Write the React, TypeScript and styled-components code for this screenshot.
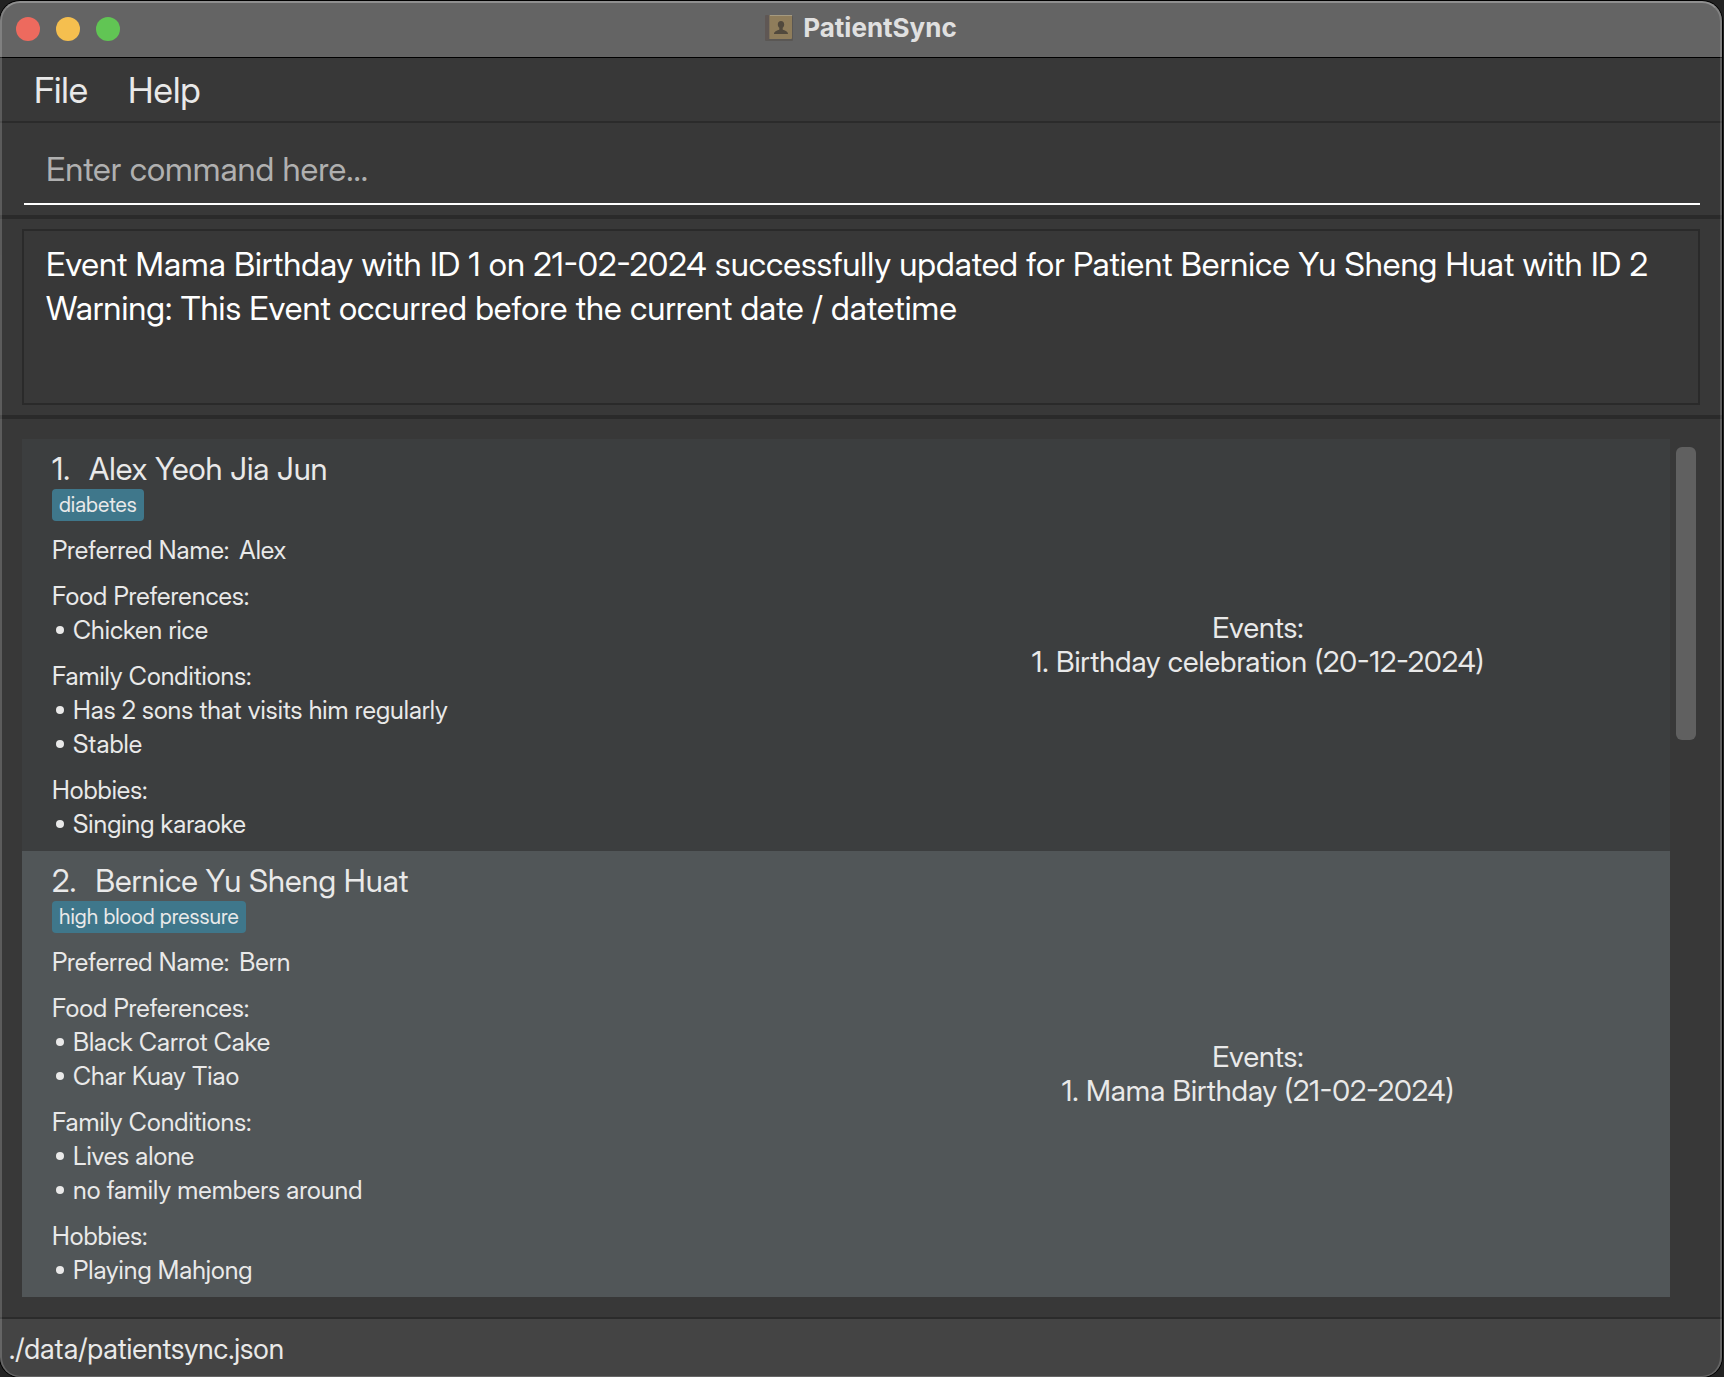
import React from "react";
import styled, { createGlobalStyle } from "styled-components";

const sans = `"Inter Display", Inter, "Liberation Sans", sans-serif`;
const titleSans = `Inter, "Liberation Sans", sans-serif`;

const GlobalStyle = createGlobalStyle`
  *, *::before, *::after { box-sizing: border-box; }
  body {
    margin: 0;
    background: #222222;
    font-family: ${sans};
    color: #e9e9e9;
  }
  button, input, textarea { font: inherit; color: inherit; }
`;

const Window = styled.div`
  position: relative;
  display: flex;
  flex-direction: column;
  min-height: calc(100vh - 1px);
  margin: 1px 2px 0 0;
  overflow: hidden;
  border-radius: 20px;
  background: #383838;
  box-shadow: 0 0 0 1px #000000;

  &::after {
    content: "";
    position: absolute;
    inset: 0;
    border: 2px solid rgba(255, 255, 255, 0.18);
    border-top-color: rgba(255, 255, 255, 0.28);
    border-bottom-width: 1px;
    border-radius: 20px;
    pointer-events: none;
  }
`;

const TitleBar = styled.header`
  display: grid;
  grid-template-columns: 1fr auto 1fr;
  align-items: center;
  height: 57px;
  padding: 0 16px;
  background: #646464;
  border-bottom: 1px solid #000000;
`;

const Lights = styled.div`
  display: flex;
  gap: 16px;
`;

const Light = styled.button<{ $color: string }>`
  width: 24px;
  height: 24px;
  padding: 0;
  border: 0;
  border-radius: 50%;
  background: ${(p) => p.$color};
`;

const Title = styled.h1`
  display: flex;
  align-items: center;
  gap: 10px;
  margin: 0;
  padding-bottom: 2px;
  font-family: ${titleSans};
  font-size: 26px;
  line-height: 32px;
  font-weight: 700;
  color: #e0e0e0;
`;

const MenuBar = styled.nav`
  display: flex;
  gap: 40px;
  height: 65px;
  padding: 0 34px;
  border-bottom: 2px solid #2b2b2b;
`;

const MenuButton = styled.button`
  padding: 0;
  border: 0;
  background: none;
  font-size: 36px;
  line-height: 60px;
`;

const CommandPane = styled.form`
  padding: 12px 22px 10px 24px;
`;

const CommandInput = styled.input`
  display: block;
  width: 100%;
  height: 70px;
  padding: 0 22px;
  border: 0;
  border-bottom: 2px solid #ffffff;
  background: none;
  outline: none;
  font-size: 33px;

  &::placeholder {
    color: #b0b0b0;
    opacity: 1;
  }
`;

const ResultPane = styled.section`
  padding: 10px 22px;
  border-top: 4px solid #2a2a2a;
  border-bottom: 4px solid #2a2a2a;
`;

const ResultText = styled.textarea`
  display: block;
  width: 100%;
  height: 176px;
  padding: 11px 22px;
  border: 2px solid #2a2a2a;
  background: none;
  outline: none;
  resize: none;
  overflow: hidden;
  font-size: 33px;
  line-height: 44px;
  color: #ffffff;
`;

const ListPane = styled.main`
  flex: 1;
  display: flex;
  align-items: flex-start;
  gap: 6px;
  padding: 20px 26px 20px 22px;
`;

const PatientList = styled.ol`
  flex: 1;
  margin: 0;
  padding: 0;
  list-style: none;
`;

const ScrollThumb = styled.div`
  width: 20px;
  height: 293px;
  margin-top: 8px;
  border-radius: 6px;
  background: #606060;
`;

const Card = styled.li<{ $alternate: boolean }>`
  display: grid;
  grid-template-columns: 1fr 1fr;
  background: ${(p) => (p.$alternate ? "#515658" : "#3c3e3f")};
`;

const Details = styled.div`
  display: flex;
  flex-direction: column;
  gap: 12px;
  padding: 10px 30px;
  font-size: 25px;
  line-height: 34px;
`;

const NameLine = styled.h2`
  display: flex;
  gap: 19px;
  margin: 0;
  font-size: 31px;
  line-height: 40px;
  font-weight: 400;
`;

const Tag = styled.span`
  display: block;
  width: max-content;
  padding: 0 7px;
  border-radius: 4px;
  background: #3f778b;
  font-size: 21px;
  line-height: 32px;
`;

const Preferred = styled.div`
  display: flex;
  gap: 10px;
`;

const Bullets = styled.ul`
  margin: 0;
  padding: 0;
  list-style: none;
`;

const Bullet = styled.li`
  display: flex;
  align-items: center;
  gap: 9px;
  padding-left: 4px;

  &::before {
    content: "";
    width: 8px;
    height: 8px;
    border-radius: 50%;
    background: #e9e9e9;
  }
`;

const Events = styled.div`
  align-self: center;
  text-align: center;
  font-size: 29px;
  line-height: 34px;
`;

const StatusBar = styled.footer`
  height: 60px;
  padding: 0 9px;
  border-top: 2px solid #2b2b2b;
  background: #444444;
  font-size: 28px;
  line-height: 60px;
`;

const BookIcon = () => (
  <svg width="28" height="28" viewBox="0 0 28 28" aria-hidden="true">
    <rect x="0" y="2" width="28" height="25" rx="1" fill="#5a5754" />
    <rect x="4" y="1" width="23" height="24" rx="1" fill="#8f7d5b" />
    <rect x="4" y="1" width="23" height="1" fill="#a59a80" />
    <rect x="0" y="1" width="4" height="25" rx="1" fill="#5f5754" />
    <rect x="4" y="1" width="1" height="24" fill="#7d705a" />
    <path d="M16 7c-2 0-3.200 1.400-3.200 3.400 0 1.500.7 2.700 1.500 3.400v1.700c0 .8-5.300 1-5.300 4.500h14c0-3.500-5.300-3.700-5.300-4.500v-1.700c.8-.7 1.500-1.900 1.500-3.400C19.200 8.400 18 7 16 7z" fill="#51493d" />
  </svg>
);

type Patient = {
  name: string;
  tag: string;
  preferred: string;
  groups: { label: string; items: string[] }[];
  events: string[];
};

const patients: Patient[] = [
  {
    name: "Alex Yeoh Jia Jun",
    tag: "diabetes",
    preferred: "Alex",
    groups: [
      { label: "Food Preferences:", items: ["Chicken rice"] },
      { label: "Family Conditions:", items: ["Has 2 sons that visits him regularly", "Stable"] },
      { label: "Hobbies:", items: ["Singing karaoke"] },
    ],
    events: ["Birthday celebration (20-12-2024)"],
  },
  {
    name: "Bernice Yu Sheng Huat",
    tag: "high blood pressure",
    preferred: "Bern",
    groups: [
      { label: "Food Preferences:", items: ["Black Carrot Cake", "Char Kuay Tiao"] },
      { label: "Family Conditions:", items: ["Lives alone", "no family members around"] },
      { label: "Hobbies:", items: ["Playing Mahjong"] },
    ],
    events: ["Mama Birthday (21-02-2024)"],
  },
];

const result =
  "Event Mama Birthday with ID 1 on 21-02-2024 successfully updated for Patient Bernice Yu Sheng Huat with ID 2\n" +
  "Warning: This Event occurred before the current date / datetime";

const PatientCard = ({ patient, index }: { patient: Patient; index: number }) => (
  <Card $alternate={index % 2 === 1}>
    <Details>
      <div>
        <NameLine>
          <span>{index + 1}.</span>
          <span>{patient.name}</span>
        </NameLine>
        <Tag>{patient.tag}</Tag>
      </div>
      <Preferred>
        <span>Preferred Name:</span>
        <span>{patient.preferred}</span>
      </Preferred>
      {patient.groups.map((group) => (
        <div key={group.label}>
          {group.label}
          <Bullets>
            {group.items.map((item) => (
              <Bullet key={item}>{item}</Bullet>
            ))}
          </Bullets>
        </div>
      ))}
    </Details>
    <Events>
      <div>Events:</div>
      {patient.events.map((event, i) => (
        <div key={event}>
          {i + 1}. {event}
        </div>
      ))}
    </Events>
  </Card>
);

export default function App() {
  return (
    <>
      <GlobalStyle />
      <Window>
        <TitleBar>
          <Lights>
            <Light type="button" $color="#ed6a5e" aria-label="Close" />
            <Light type="button" $color="#f5bf4f" aria-label="Minimize" />
            <Light type="button" $color="#61c554" aria-label="Zoom" />
          </Lights>
          <Title>
            <BookIcon />
            PatientSync
          </Title>
        </TitleBar>
        <MenuBar>
          <MenuButton type="button">File</MenuButton>
          <MenuButton type="button">Help</MenuButton>
        </MenuBar>
        <CommandPane onSubmit={(e) => e.preventDefault()}>
          <CommandInput type="text" aria-label="Command" placeholder="Enter command here..." />
        </CommandPane>
        <ResultPane>
          <ResultText readOnly aria-label="Result" value={result} />
        </ResultPane>
        <ListPane>
          <PatientList>
            {patients.map((patient, index) => (
              <PatientCard key={patient.name} patient={patient} index={index} />
            ))}
          </PatientList>
          <ScrollThumb />
        </ListPane>
        <StatusBar>./data/patientsync.json</StatusBar>
      </Window>
    </>
  );
}
